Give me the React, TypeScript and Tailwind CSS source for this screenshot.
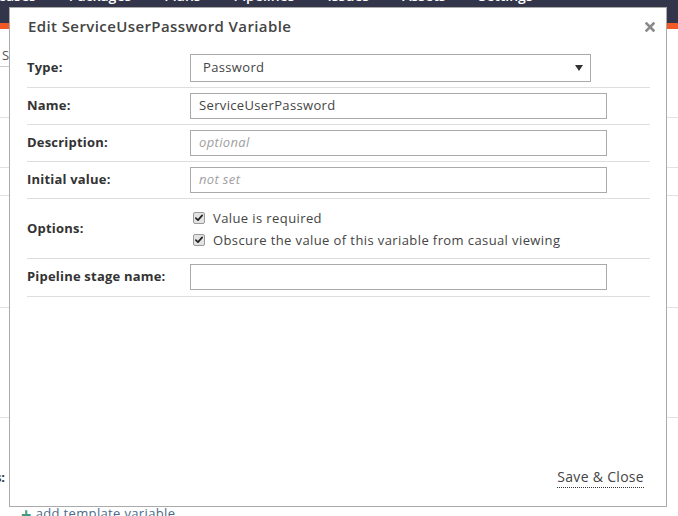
const navItems = ['Releases', 'Packages', 'Plans', 'Pipelines', 'Issues', 'Assets', 'Settings'];

function CheckBox() {
  return (
    <span className="flex h-[12px] w-[12px] items-center justify-center rounded-[2px] border border-[#9a9a9a] bg-[#e3e3e3]">
      <svg viewBox="0 0 12 12" className="h-[10px] w-[10px]">
        <path d="M2.2 6.2 L4.8 8.6 L9.8 2.8" fill="none" stroke="#222" strokeWidth={2} strokeLinecap="round" strokeLinejoin="round" />
      </svg>
    </span>
  );
}

function TextInput({ value, placeholder }: { value?: string; placeholder?: string }) {
  return (
    <div className="flex h-[26px] w-[417px] items-center border border-[#aaa] px-[8px] text-[13px] tracking-[0.35px]">
      {value ? (
        <span className="text-[#444]">{value}</span>
      ) : (
        <span className="italic text-[#a0a0a0]">{placeholder}</span>
      )}
    </div>
  );
}

function Row({ label, children, className = '' }: { label: string; children: React.ReactNode; className?: string }) {
  return (
    <div className={`flex items-center border-b border-[#dedede] ${className}`}>
      <div className="w-[163px] text-[13px] font-bold tracking-[0.2px] text-[#333]">{label}</div>
      <div className="flex-1">{children}</div>
    </div>
  );
}

export default function App() {
  return (
    <div className="relative h-[516px] w-[678px] overflow-hidden bg-white font-['Open_Sans',sans-serif]">
      {/* page behind the dialog */}
      <div className="h-[23px] overflow-hidden bg-[#33354a]">
        <div className="-mt-[13px] flex gap-[33px] text-[14px] font-semibold leading-[18px] text-white">
          {navItems.map((item, i) => (
            <span key={item} className={i === 0 ? '-ml-[23px]' : ''}>{item}</span>
          ))}
        </div>
      </div>
      <div className="h-[6px] bg-[#f15a24]" />
      <div className="h-[38px] w-[40px] border-b border-[#ccc] pt-[19px] pl-[2px] text-[13px] leading-[14px] text-[#555]">S</div>
      <div className="h-[51px] border-b border-[#e2e2e2]" />
      <div className="h-[50px] border-b border-[#e2e2e2]" />
      <div className="h-[28px] border-b border-[#e2e2e2]" />
      <div className="h-[112px] border-b border-[#e2e2e2]" />
      <div className="h-[110px] border-b border-[#e2e2e2]" />
      <div className="pt-[52px] text-[13px] font-bold leading-[14px] text-[#333]">
        <span className="-ml-[59px]">Variables:</span>
      </div>
      <div className="mt-[20px] flex items-center gap-[4px] pl-[21px] text-[13px] tracking-[0.35px] text-[#4a6a8a]">
        <span className="text-[18px] font-bold leading-[14px] text-[#3f9a80]">+</span>
        <span>add template variable</span>
      </div>

      {/* dialog */}
      <div className="absolute left-[9px] top-[7px] flex h-[500px] w-[658px] flex-col border border-[#aaa] bg-white pl-[17px] pr-[16px]">
        <div className="flex items-start justify-between pt-[8px] pb-[13px]">
          <h2 className="pl-[1px] text-[15px] font-semibold leading-[20px] tracking-[0.4px] text-[#444]">Edit ServiceUserPassword Variable</h2>
          <svg viewBox="0 0 10 10" className="mt-[6px] mr-[-5px] h-[10px] w-[10px]">
            <path d="M1.5 1.5 L8.5 8.5 M8.5 1.5 L1.5 8.5" stroke="#8a8a8a" strokeWidth={2.6} strokeLinecap="square" />
          </svg>
        </div>

        <Row label="Type:" className="pt-[5px] pb-[5px]">
          <div className="flex h-[28px] w-[401px] items-center justify-between border border-[#aaa] pl-[12px] pr-[7px] text-[13px] tracking-[0.35px] text-[#444]">
            <span>Password</span>
            <svg viewBox="0 0 8 6" className="h-[6px] w-[8px]">
              <path d="M0 0 L8 0 L4 6 Z" fill="#333" />
            </svg>
          </div>
        </Row>
        <Row label="Name:" className="py-[5px]">
          <TextInput value="ServiceUserPassword" />
        </Row>
        <Row label="Description:" className="py-[5px]">
          <TextInput placeholder="optional" />
        </Row>
        <Row label="Initial value:" className="py-[5px]">
          <TextInput placeholder="not set" />
        </Row>
        <Row label="Options:" className="pt-[8px] pb-[7px]">
          <div className="flex flex-col pl-[3px] text-[13px] leading-[22px] tracking-[0.4px] text-[#444]">
            <label className="flex items-center gap-[8px]">
              <CheckBox />
              <span>Value is required</span>
            </label>
            <label className="flex items-center gap-[8px]">
              <CheckBox />
              <span>Obscure the value of this variable from casual viewing</span>
            </label>
          </div>
        </Row>
        <Row label="Pipeline stage name:" className="pt-[5px] pb-[6px]">
          <TextInput />
        </Row>

        <div className="flex flex-1 items-end justify-end pb-[18px] pr-[6px]">
          <button className="border-b border-dotted border-[#333] pb-[1px] text-[14px] leading-[18px] tracking-[0.3px] text-[#444]">
            Save &amp; Close
          </button>
        </div>
      </div>
    </div>
  );
}
